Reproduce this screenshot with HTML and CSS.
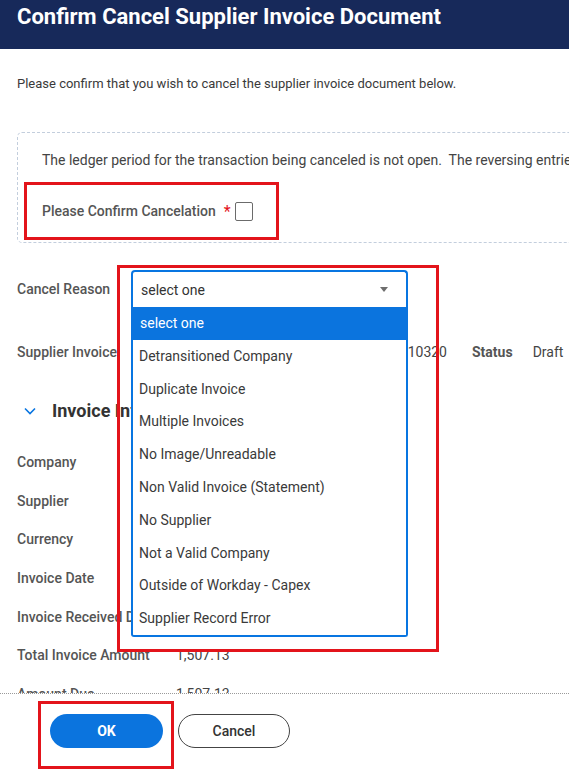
FILE: index.html
```html
<!DOCTYPE html>
<html lang="en">
<head>
<meta charset="utf-8">
<title>Confirm Cancel Supplier Invoice Document</title>
<link rel="stylesheet" href="styles.css">
</head>
<body>
<header class="topbar">
  <h1 class="title">Confirm Cancel Supplier Invoice Document</h1>
</header>
<main class="content">
  <p class="intro">Please confirm that you wish to cancel the supplier invoice document below.</p>

  <section class="notice">
    <p class="notice-text">The ledger period for the transaction being canceled is not open.&nbsp; The reversing entries will be posted in the next open period.</p>
    <div class="annot annot-confirm">
      <span class="confirm-label">Please Confirm Cancelation</span>
      <span class="req">*</span>
      <span class="checkbox"></span>
    </div>
  </section>

  <div class="reason-row">
    <span class="label">Cancel Reason</span>
    <div class="select-wrap">
      <div class="select-box">
        <span class="select-value">select one</span>
        <span class="caret"></span>
      </div>
      <ul class="options">
        <li class="option selected">select one</li>
        <li class="option">Detransitioned Company</li>
        <li class="option">Duplicate Invoice</li>
        <li class="option">Multiple Invoices</li>
        <li class="option">No Image/Unreadable</li>
        <li class="option">Non Valid Invoice (Statement)</li>
        <li class="option">No Supplier</li>
        <li class="option">Not a Valid Company</li>
        <li class="option">Outside of Workday - Capex</li>
        <li class="option">Supplier Record Error</li>
      </ul>
      <div class="annot annot-drop"></div>
    </div>
  </div>

  <div class="doc-row">
    <span class="label doc-label">Supplier Invoice</span>
    <span class="doc-value">SUPPLIER_INVOICE-6-10320</span>
    <span class="label status-label">Status</span>
    <span class="status-value">Draft</span>
  </div>

  <h2 class="section-title">
    <svg class="chevron" width="12" height="8" viewBox="0 0 12 8" aria-hidden="true"><path d="M1 1.5 L6 6.5 L11 1.5" fill="none" stroke="#0875e1" stroke-width="1.6"/></svg>
    <span>Invoice Information</span>
  </h2>

  <div class="fields">
    <div class="field"><span class="label">Company</span><span class="value">Workday Inc.</span></div>
    <div class="field"><span class="label">Supplier</span><span class="value">Office Supplies Co.</span></div>
    <div class="field"><span class="label">Currency</span><span class="value">USD</span></div>
    <div class="field"><span class="label">Invoice Date</span><span class="value">03/15/2021</span></div>
    <div class="field"><span class="label">Invoice Received Date</span><span class="value">03/16/2021</span></div>
    <div class="field"><span class="label">Total Invoice Amount</span><span class="value">1,507.13</span></div>
    <div class="field"><span class="label">Amount Due</span><span class="value">1,507.13</span></div>
  </div>
</main>
<footer class="actions">
  <div class="annot annot-ok">
    <button class="btn btn-ok" type="button">OK</button>
  </div>
  <button class="btn btn-cancel" type="button">Cancel</button>
</footer>
</body>
</html>
```
FILE: styles.css
```css
html, body {
  margin: 0;
  padding: 0;
}
body {
  width: 569px;
  height: 769px;
  overflow: hidden;
  display: flex;
  flex-direction: column;
  background: #fff;
  font-family: Roboto, "Liberation Sans", Arial, sans-serif;
  font-size: 14px;
  color: #333;
}

.topbar {
  flex: 0 0 49px;
  background: #17295a;
}
.title {
  margin: 0;
  padding: 2px 0 0 17px;
  font-size: 22px;
  line-height: 30px;
  font-weight: 700;
  color: #fff;
  white-space: nowrap;
}

.content {
  flex: 1 1 auto;
  overflow: hidden;
  padding-left: 17px;
}

.intro {
  margin: 25px 0 0;
  font-size: 13px;
  line-height: 20px;
  color: #3a3a3a;
}

.notice {
  margin-top: 38px;
  width: 640px;
  border: 1px dashed #c3cedd;
  border-radius: 5px;
  padding: 17px 0 2px 0;
}
.notice-text {
  margin: 0 0 12px 24px;
  line-height: 20px;
  color: #444;
  white-space: nowrap;
}

.annot {
  border: 3px solid #e3141b;
  box-sizing: border-box;
}
.annot-confirm {
  margin-left: 6px;
  width: 255px;
  height: 58px;
  display: flex;
  align-items: center;
  padding-left: 15px;
}
.confirm-label {
  font-weight: 500;
  color: #555;
}
.req {
  color: #e3141b;
  margin-left: 8px;
  font-size: 16px;
  line-height: 1;
  position: relative;
  top: 1px;
}
.checkbox {
  margin-left: 4px;
  width: 16px;
  height: 17px;
  border: 1px solid #6b6b6b;
  border-radius: 2px;
}

.label {
  font-weight: 500;
  color: #555;
  white-space: nowrap;
}

.reason-row {
  margin-top: 27px;
  display: flex;
  align-items: center;
}
.reason-row .label {
  width: 114px;
}
.select-wrap {
  position: relative;
  width: 277px;
}
.select-box {
  height: 37px;
  box-sizing: border-box;
  border: 2px solid #0875e1;
  border-bottom: none;
  border-radius: 4px 4px 0 0;
  display: flex;
  align-items: center;
  justify-content: space-between;
  padding: 0 18px 0 8px;
  color: #333;
}
.caret {
  width: 0;
  height: 0;
  border-left: 4px solid transparent;
  border-right: 4px solid transparent;
  border-top: 5px solid #6e6e6e;
}
.options {
  position: absolute;
  top: 37px;
  left: 0;
  width: 277px;
  box-sizing: border-box;
  margin: 0;
  padding: 0;
  list-style: none;
  background: #fff;
  border: 2px solid #0875e1;
  border-top: none;
  border-radius: 0 0 3px 3px;
  z-index: 2;
}
.option {
  height: 32.8px;
  line-height: 32.8px;
  padding-left: 6px;
  color: #3a3a3a;
  white-space: nowrap;
}
.option.selected {
  background: #0b74de;
  color: #fff;
  margin: 0 -2px;
  padding-left: 9px;
}
.annot-drop {
  position: absolute;
  left: -14px;
  top: -5px;
  width: 322px;
  height: 387px;
  z-index: 3;
  pointer-events: none;
}

.doc-row {
  margin-top: 35px;
  display: flex;
  align-items: center;
  line-height: 20px;
}
.doc-label {
  width: 159px;
}
.doc-value {
  width: 271px;
  text-align: right;
  white-space: nowrap;
  color: #444;
}
.status-label {
  margin-left: 25px;
  font-weight: 700;
}
.status-value {
  margin-left: 20px;
  color: #444;
}

.section-title {
  margin: 37px 0 0;
  padding-left: 7px;
  display: flex;
  align-items: center;
  gap: 16px;
  font-size: 18px;
  line-height: 24px;
  font-weight: 700;
  color: #333;
}
.chevron {
  display: block;
}

.fields {
  margin-top: 29px;
  display: flex;
  flex-direction: column;
  gap: 18.7px;
}
.field {
  display: flex;
  line-height: 20px;
}
.field .label {
  width: 159px;
}
.field .value {
  color: #444;
}

.actions {
  flex: 0 0 76px;
  box-sizing: border-box;
  border-top: 1px dotted #9a9a9a;
  padding: 7px 0 0 38px;
  display: flex;
  align-items: flex-start;
  gap: 4px;
  background: #fff;
}
.annot-ok {
  width: 136px;
  height: 68px;
  padding: 10px 0 0 9px;
}
.btn {
  height: 34px;
  border-radius: 17px;
  font-family: Roboto, "Liberation Sans", Arial, sans-serif;
  font-size: 14px;
  font-weight: 500;
  padding: 0;
}
.btn-ok {
  width: 113px;
  background: #0b74de;
  border: none;
  color: #fff;
  font-weight: 700;
}
.btn-cancel {
  margin-top: 13px;
  width: 112px;
  background: #fff;
  border: 1px solid #444;
  color: #333;
}
```
